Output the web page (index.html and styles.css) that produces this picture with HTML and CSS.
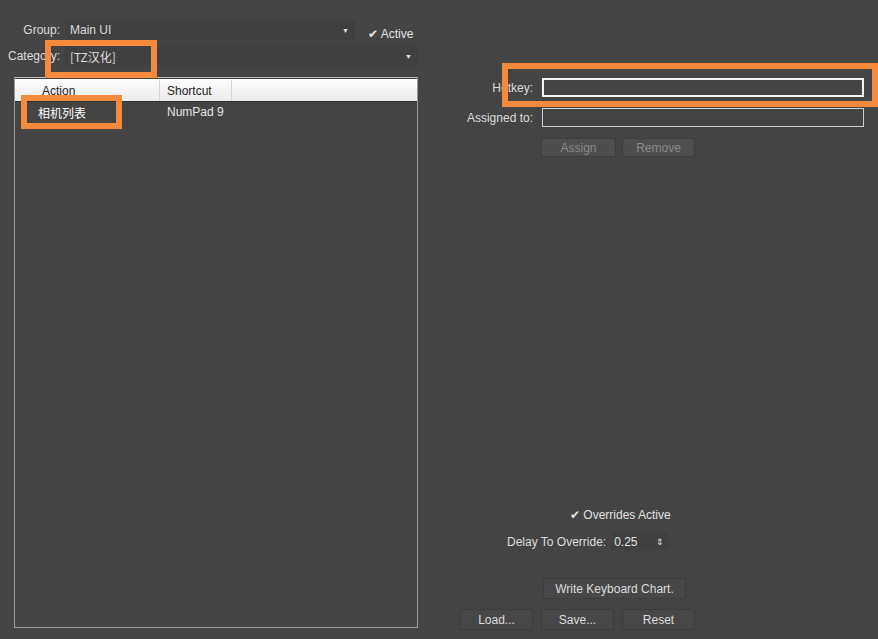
FILE: index.html
```html
<!DOCTYPE html>
<html>
<head>
    <meta charset="utf-8">
    <title>Hotkey Editor</title>
    <link rel="stylesheet" href="styles.css">
</head>
<body>
    <div class="editor">
        <div class="left">
            <div class="line">
                <span class="lbl">Group:</span>
                <div class="combo combo-group"><span>Main UI</span><span class="arrow">&#9660;</span></div>
                <span class="check">&#10004; Active</span>
            </div>
            <div class="line line2">
                <span class="lbl">Category:</span>
                <div class="combo combo-cat"><span>[TZ汉化]</span><span class="arrow">&#9660;</span></div>
            </div>
            <div class="list">
                <div class="list-head">
                    <div class="col col-action">Action</div>
                    <div class="col col-short">Shortcut</div>
                    <div class="col col-rest"></div>
                </div>
                <div class="list-row">
                    <div class="col col-action cjk">相机列表</div>
                    <div class="col col-short">NumPad 9</div>
                </div>
            </div>
        </div>

        <div class="right">
            <div class="form">
                <span class="flbl">Hotkey:</span>
                <div class="field field-hot"></div>
                <span class="flbl">Assigned to:</span>
                <div class="field"></div>
            </div>
            <div class="btns top-btns">
                <button class="btn off btn-assign">Assign</button>
                <button class="btn off btn-remove">Remove</button>
            </div>

            <div class="bottom">
                <div class="check overrides">&#10004; Overrides Active</div>
                <div class="delay">
                    <span>Delay To Override:</span>
                    <div class="spin"><span>0.25</span><span class="spin-arr">&#8661;</span></div>
                </div>
                <button class="btn btn-chart">Write Keyboard Chart.</button>
                <div class="btns">
                    <button class="btn btn-io">Load...</button>
                    <button class="btn btn-io">Save...</button>
                    <button class="btn btn-io">Reset</button>
                </div>
            </div>
        </div>

        <!-- annotation boxes -->
        <div class="mark mark-cat"></div>
        <div class="mark mark-row"></div>
        <div class="mark mark-hot"></div>
    </div>
</body>
</html>
```

FILE: styles.css
```css
body {
    margin: 0;
    background: #444444;
    color: #dcdcdc;
    font-family: "Liberation Sans", "Noto Sans CJK SC", sans-serif;
    font-size: 12px;
}
.editor {
    position: relative;
    display: flex;
    width: 878px;
    height: 639px;
    overflow: hidden;
}
.left {
    width: 418px;
    padding-top: 20px;
}
.line {
    display: flex;
    align-items: center;
    height: 20px;
}
.line2 {
    margin-top: 6px;
}
.lbl {
    width: 60px;
    text-align: right;
    margin-right: 5px;
}
.combo {
    display: flex;
    justify-content: space-between;
    align-items: center;
    height: 20px;
    padding: 0 6px 0 5px;
    box-sizing: border-box;
    background: #404040;
}
.combo-group {
    width: 290px;
}
.combo-cat {
    width: 353px;
}
.cjk, .combo-cat span:first-child {
    font-family: "Noto Sans CJK SC", sans-serif;
    font-size: 12px;
}
.arrow {
    font-size: 7px;
    color: #e0e0e0;
}
.check {
    margin-left: 13px;
    margin-top: 7px;
    color: #e2e2e2;
}
.list {
    margin: 11px 0 0 14px;
    width: 404px;
    height: 551px;
    box-sizing: border-box;
    border: 1px solid #9a9a9a;
    border-top-color: #bcbcbc;
}
.list-head {
    display: flex;
    height: 23px;
    padding-top: 1px;
    box-sizing: border-box;
    background: linear-gradient(#fdfdfd, #ececec);
    color: #222;
    border-bottom: 1px solid #2e2e2e;
    margin-top: 1px;
}
.list-head .col {
    border-right: 1px solid #d8d8d8;
}
.col {
    display: flex;
    align-items: center;
    box-sizing: border-box;
}
.col-action {
    width: 145px;
    padding-left: 27px;
}
.col-short {
    width: 72px;
    padding-left: 7px;
}
.col-rest {
    flex: 1;
    border-right: none !important;
}
.list-row {
    display: flex;
    height: 20px;
}
.list-row .col-action {
    padding-left: 23px;
    color: #fff;
}
.list-row .col-short {
    color: #e4e4e4;
}
.right {
    margin-left: 22px;
    width: 438px;
    display: flex;
    flex-direction: column;
}
.form {
    display: grid;
    grid-template-columns: 93px 322px;
    column-gap: 9px;
    row-gap: 11px;
    align-items: center;
    margin-top: 78px;
}
.flbl {
    text-align: right;
}
.field {
    height: 19px;
    box-sizing: border-box;
    border: 1px solid #cfcfcf;
    background: #444;
}
.field-hot {
    border: 2px solid #f2f2f2;
}
.btns {
    display: flex;
    gap: 6px;
}
.top-btns {
    margin: 11px 0 0 101px;
}
.btn {
    height: 19px;
    padding: 0;
    background: #474747;
    border: 1px solid #3c3c3c;
    border-radius: 2px;
    color: #dcdcdc;
    font-family: "Liberation Sans", sans-serif;
    font-size: 12px;
}
.off {
    color: #8a8a8a;
    background: #4e4e4e;
}
.btn-assign {
    width: 75px;
}
.btn-remove {
    width: 73px;
}
.bottom {
    margin-top: 351px;
    display: flex;
    flex-direction: column;
}
.overrides {
    margin: 0 0 0 130px;
}
.delay {
    display: flex;
    align-items: center;
    margin: 11px 0 0 67px;
    gap: 5px;
}
.spin {
    display: flex;
    justify-content: space-between;
    align-items: center;
    width: 57px;
    height: 17px;
    padding: 0 4px 0 3px;
    box-sizing: border-box;
    background: #404040;
    color: #e0e0e0;
}
.spin-arr {
    font-size: 9px;
}
.btn-chart {
    width: 143px;
    height: 21px;
    margin: 28px 0 0 103px;
}
.bottom .btns {
    margin: 10px 0 0 20px;
    gap: 8px;
}
.btn-io {
    width: 73px;
    height: 21px;
}
.mark {
    position: absolute;
    box-sizing: border-box;
    border: 6px solid #f58a3d;
}
.mark-cat {
    left: 45px;
    top: 40px;
    width: 112px;
    height: 38px;
}
.mark-row {
    left: 21px;
    top: 95px;
    width: 101px;
    height: 34px;
}
.mark-hot {
    left: 502px;
    top: 63px;
    width: 376px;
    height: 44px;
}
```
